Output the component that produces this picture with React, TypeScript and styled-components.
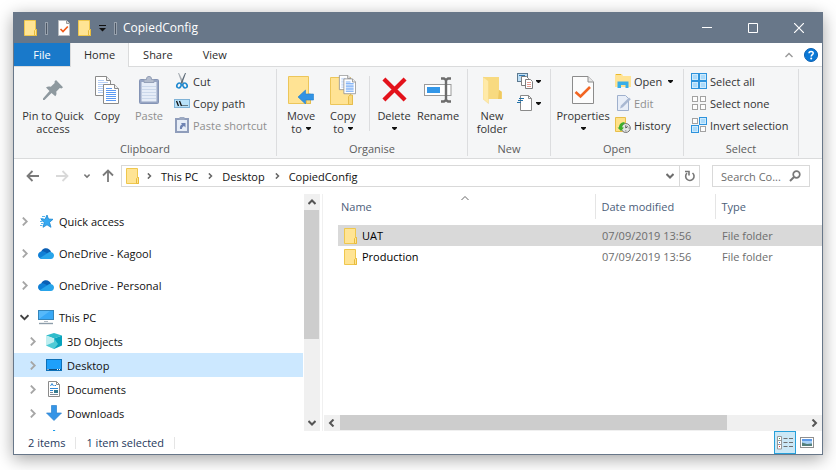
import React from "react";
import styled, { createGlobalStyle, css } from "styled-components";

const GlobalStyle = createGlobalStyle`
  *, *::before, *::after { box-sizing: border-box; }
  body { margin: 0; background: #fff; }
  body, button, input, table {
    font-family: "Open Sans", "Noto Sans", sans-serif;
    font-size: 11px;
    line-height: 13px;
  }
  button { border: 0; padding: 0; margin: 0; background: none; color: inherit; cursor: default; }
  svg { display: block; flex: none; }
`;

/* ---------- window frame ---------- */

const Page = styled.div`
  display: flex;
  height: 100vh;
  min-height: 360px;
  padding: 12px 13px 15px;
  overflow: hidden;
`;

const Window = styled.div`
  flex: 1;
  min-width: 0;
  display: flex;
  flex-direction: column;
  background: #fff;
  border: 1px solid #687789;
  box-shadow: 0 4px 16px rgba(0, 0, 0, 0.36);
`;

const TitleBar = styled.header`
  display: flex;
  align-items: center;
  height: 30px;
  flex: none;
  padding-left: 10px;
  background: #687789;
  color: #fff;
`;

const QuickTools = styled.div<{ $lead?: number }>`
  display: flex;
  align-items: center;
  gap: 8px;
  margin-left: ${(p) => p.$lead ?? 0}px;
`;

const IconButton = styled.button`
  display: flex;
  align-items: center;
  justify-content: center;
`;

const TitleDivider = styled.span`
  width: 3px;
  height: 13px;
  border: 1px solid #96a0ac;
  background: #4d5866;
`;

const Title = styled.h1`
  flex: 1;
  margin: 0 0 0 6px;
  font-size: 12px;
  line-height: 16px;
  font-weight: 400;
`;

const CaptionButton = styled(IconButton)`
  width: 46px;
  height: 30px;
`;

/* ---------- tabs ---------- */

const TabRow = styled.nav`
  display: flex;
  flex: none;
  height: 24px;
  border-bottom: 1px solid #dadbdc;
  color: #2b2b2b;
`;

const Tab = styled.button<{ $kind?: "file" | "active" }>`
  min-width: 56px;
  padding: 0 13px;
  border: solid transparent;
  border-width: 0 1px;
  height: 23px;
  ${(p) => p.$kind === "file" && css`background: #1979ca; border-color: #1979ca; color: #fff;`}
  ${(p) =>
    p.$kind === "active" &&
    css`
      height: 24px;
      padding-bottom: 1px;
      min-width: 58px;
      background: #f5f6f7;
      border-color: #dadbdc;
    `}
`;

const TabTools = styled.div`
  display: flex;
  align-items: center;
  gap: 11px;
  margin-left: auto;
  padding-right: 4px;
`;

/* ---------- ribbon ---------- */

const Ribbon = styled.div`
  display: flex;
  flex: none;
  height: 92px;
  padding-top: 2px;
  background: #f5f6f7;
  border-bottom: 1px solid #dadbdc;
  color: #333;
`;

const Group = styled.section<{ $width: number }>`
  width: ${(p) => p.$width}px;
  flex: none;
  display: flex;
  flex-direction: column;
  height: 87px;
  border-right: 1px solid #dcdddf;
`;

const GroupBody = styled.div<{ $pad?: number }>`
  display: flex;
  flex: 1;
  align-items: flex-start;
  padding: 1px 0 0 ${(p) => p.$pad ?? 4}px;
`;

const GroupLabel = styled.h2`
  margin: 0;
  padding-bottom: 1px;
  font-size: 11px;
  line-height: 13px;
  font-weight: 400;
  text-align: center;
  color: #5c5c5c;
`;

const BigButton = styled.button<{ $width: number; $off?: boolean }>`
  display: flex;
  flex-direction: column;
  align-items: center;
  width: ${(p) => p.$width}px;
  color: ${(p) => (p.$off ? "#8f8f8f" : "inherit")};
  white-space: nowrap;
`;

const BigIcon = styled.span`
  display: flex;
  align-items: center;
  height: 39px;
`;

const Line = styled.span`
  display: flex;
  align-items: center;
  gap: 4px;
  min-height: 13px;
`;

const SmallStack = styled.div<{ $gap?: number }>`
  display: flex;
  flex-direction: column;
  margin-left: ${(p) => p.$gap ?? 0}px;
`;

const SmallButton = styled.button<{ $off?: boolean }>`
  display: flex;
  align-items: center;
  gap: 3px;
  height: 22px;
  white-space: nowrap;
  color: ${(p) => (p.$off ? "#8f8f8f" : "inherit")};
`;

const MenuGap = styled.span<{ $wide?: boolean }>`
  margin-left: ${(p) => (p.$wide ? 3 : 0)}px;
`;

const InnerDivider = styled.span`
  width: 1px;
  height: 55px;
  margin: 6px 4px 0;
  background: #dcdddf;
`;

/* ---------- address bar ---------- */

const AddressRow = styled.div`
  display: flex;
  align-items: center;
  flex: none;
  height: 35px;
  padding: 0 12px 1px;
`;

const NavButtons = styled.div`
  display: flex;
  align-items: center;
  gap: 15px;
  margin-right: 6px;
`;

const NavPair = styled.div`
  display: flex;
  align-items: center;
  gap: 11px;
`;

const AddressBox = styled.div`
  display: flex;
  align-items: center;
  flex: 1;
  min-width: 0;
  height: 22px;
  padding-left: 4px;
  border: 1px solid #d9d9d9;
  color: #111;
`;

const Crumbs = styled.div`
  display: flex;
  align-items: center;
  flex: 1;
  gap: 9px;
  margin-left: 7px;
`;

const Crumb = styled.button`
  color: #111;
  white-space: nowrap;
`;

const BoxButton = styled(IconButton)<{ $line?: boolean }>`
  width: 20px;
  height: 20px;
  border-left: 1px solid ${(p) => (p.$line ? "#d9d9d9" : "transparent")};
`;

const SearchBox = styled.label`
  display: flex;
  align-items: center;
  width: 98px;
  height: 22px;
  margin-left: 12px;
  padding: 0 8px;
  border: 1px solid #d9d9d9;
`;

const SearchInput = styled.input`
  flex: 1;
  min-width: 0;
  border: 0;
  padding: 0;
  outline: 0;
  background: none;
  &::placeholder { color: #6d6d6d; opacity: 1; }
`;

/* ---------- body ---------- */

const Body = styled.div`
  display: flex;
  flex: 1;
  min-height: 0;
`;

const SidePane = styled.aside`
  display: flex;
  flex: none;
  width: 309px;
  padding-right: 2px;
  border-right: 1px solid #f0f0f0;
`;

const Tree = styled.ul`
  flex: 1;
  min-width: 0;
  margin: 0;
  padding: 15px 1px 0 0;
  list-style: none;
  overflow: hidden;
`;

const TreeItem = styled.li<{ $gap?: boolean }>`
  margin-bottom: ${(p) => (p.$gap ? 8 : 0)}px;
`;

const TreeButton = styled.button<{ $depth: number; $on?: boolean }>`
  display: flex;
  align-items: center;
  width: 100%;
  height: 24px;
  gap: 5px;
  padding-left: ${(p) => 5 + p.$depth * 8}px;
  background: ${(p) => (p.$on ? "#cce8ff" : "transparent")};
  color: #111;
  white-space: nowrap;
`;

const Twisty = styled.span`
  display: flex;
  justify-content: center;
  width: 10px;
  margin-right: 4px;
`;

const IconSlot = styled.span`
  display: flex;
  justify-content: center;
  width: 16px;
`;

const ScrollBar = styled.div<{ $side?: boolean }>`
  display: flex;
  flex: none;
  flex-direction: ${(p) => (p.$side ? "row" : "column")};
  ${(p) => (p.$side ? "height: 16px;" : "width: 16px;")}
  background: #f0f0f0;
`;

const ScrollArrow = styled(IconButton)`
  flex: none;
  width: 16px;
  height: 16px;
`;

const Track = styled.div<{ $side?: boolean }>`
  flex: 1;
  ${(p) => (p.$side ? "padding-bottom: 1px;" : "padding-right: 1px;")}
`;

const Thumb = styled.div<{ $side?: boolean }>`
  background: #cdcdcd;
  ${(p) => (p.$side ? "width: 83%; height: 100%;" : "height: 63%; width: 100%;")}
`;

const Files = styled.main`
  display: flex;
  flex-direction: column;
  flex: 1;
  min-width: 0;
  padding-left: 1px;
`;

const ListArea = styled.div`
  flex: 1;
  padding-left: 14px;
  overflow: hidden;
`;

const Table = styled.table`
  width: 100%;
  table-layout: fixed;
  border-collapse: collapse;
`;

const Head = styled.th<{ $width?: number }>`
  width: ${(p) => (p.$width ? `${p.$width}px` : "auto")};
  height: 25px;
  padding: 0 0 0 ${(p) => (p.$width ? 6 : 3)}px;
  border-left: ${(p) => (p.$width ? 1 : 0)}px solid #e5e5e5;
  text-align: left;
  font-weight: 400;
  color: #4c607a;
`;

const HeadInner = styled.div`
  display: grid;
  grid-template-columns: 1fr auto 1fr;
  height: 25px;
  padding-right: 5px;
  align-items: center;
`;

const SortMark = styled.span`
  align-self: start;
`;

const Spacer = styled.tr`
  height: 6px;
`;

const Row = styled.tr<{ $on?: boolean }>`
  height: 21px;
  background: ${(p) => (p.$on ? "#d9d9d9" : "transparent")};
`;

const Cell = styled.td`
  padding: 0 0 0 7px;
  color: #6d6d6d;
  white-space: nowrap;
`;

const NameCell = styled(Cell)`
  padding-left: 6px;
  color: #000;
`;

const FileName = styled.div`
  display: flex;
  align-items: center;
  gap: 5px;
`;

/* ---------- status bar ---------- */

const StatusBar = styled.footer`
  display: flex;
  align-items: center;
  flex: none;
  height: 23px;
  padding: 0 7px 0 14px;
  color: #26395c;
`;

const StatusText = styled.span`
  display: flex;
  align-items: center;
  height: 12px;
  padding-right: 10px;
  margin-right: 10px;
  border-right: 1px solid #e5e5e5;
`;

const Views = styled.div`
  display: flex;
  align-items: center;
  gap: 3px;
  margin-left: auto;
`;

const ViewButton = styled(IconButton)<{ $on?: boolean }>`
  height: 23px;
  width: ${(p) => (p.$on ? 22 : 16)}px;
  border: ${(p) => (p.$on ? 1 : 0)}px solid #26a0da;
  background: ${(p) => (p.$on ? "#cbe8f6" : "transparent")};
`;

/* ---------- icons ---------- */

const Folder = () => (
  <svg width="13" height="16" viewBox="0 0 13 16">
    <path d="M.5.5h11v9h1v6H.5z" fill="#ffe494" stroke="#efc74d" />
    <path d="M10.500 15V10.500l1-1h1v6h-2z" fill="#ffe494" stroke="#e8bb3b" />
  </svg>
);

const Chevron = ({ dir, size = 8, color = "#a0a0a0", w = 2 }: { dir: "r" | "l" | "u" | "d"; size?: number; color?: string; w?: number }) => {
  const d = { r: "M2.500 0.500L6 4L2.500 7.500", l: "M5.500 0.500L2 4L5.500 7.500", u: "M.5 6L4 2.500L7.500 6", d: "M.5 2L4 5.500L7.500 2" }[dir];
  return (
    <svg width={size} height={size} viewBox="0 0 8 8">
      <path d={d} fill="none" stroke={color} strokeWidth={w} />
    </svg>
  );
};

const Caret = () => (
  <svg width="5" height="3" viewBox="0 0 5 3"><path d="M0 0h5v1L3 3H2L0 1z" fill="#111" /></svg>
);

const Arrow = ({ turn = 0, color = "#7a7a7a" }: { turn?: number; color?: string }) => (
  <svg width="14" height="14" viewBox="0 0 14 14">
    <g transform={`rotate(${turn} 7 7)`} fill="none" stroke={color} strokeWidth="1.800">
      <path d="M1.500 7H13M6.500 2L1.500 7l5 5" />
    </g>
  </svg>
);

const CheckPage = () => (
  <svg width="22" height="28" viewBox="0 0 22 28">
    <path d="M.5.5h15.500l5.500 5.500v21.500H.5z" fill="#fcfcfc" stroke="#8c8c8c" />
    <path d="M16 .5V6h5.500" fill="#e6e6e6" stroke="#8c8c8c" />
    <path d="M3.500 16l5 4.500L18 11" fill="none" stroke="#f26522" strokeWidth="2.600" />
  </svg>
);

const MiniCheckPage = () => (
  <svg width="12" height="16" viewBox="0 0 12 16">
    <path d="M.5.500h8l3 3v12H.5z" fill="#fff" stroke="#b9bcc0" />
    <path d="M8.500.5v3h3" fill="#ddd" stroke="#9b9b9b" />
    <path d="M2.500 9l2.500 2.500L9.800 6.500" fill="none" stroke="#f05a1a" strokeWidth="1.700" />
  </svg>
);

const Pin = () => (
  <svg width="20" height="20" viewBox="0 0 20 20">
    <path d="M13 0l7 7.200-1.500 1.200-1.700-.3-3.600 3.600c.6 1.800.3 3.300-.9 4.600L8.500 13 1.500 20H0v-1.500L6.500 11 3 7.500c1.500-1.200 3-1.400 4.800-.7l3.900-3.700-.2-1.700z" fill="#8e999f" />
  </svg>
);

const SheetLines = ({ x, y, faint }: { x: number; y: number; faint?: boolean }) => (
  <g transform={`translate(${x} ${y})`}>
    <path d="M.5.500h11l4 4v15H.5z" fill="#fff" stroke="#8a8a8a" />
    <path d="M11.500.500v4h4" fill="#eee" stroke="#8a8a8a" />
    <path d="M3 4.500h6M3 6.500h10M3 8.500h10M3 10.500h10M3 12.500h10M3 14.500h10M3 16.500h10" stroke={faint ? "#b5cff7" : "#5c9af3"} />
  </g>
);

const CopyBig = () => (
  <svg width="24" height="28" viewBox="0 0 24 28">
    <SheetLines x={0} y={0} faint />
    <SheetLines x={8} y={8} />
  </svg>
);

const PasteBig = () => (
  <svg width="20" height="28" viewBox="0 0 20 28">
    <rect x=".5" y="3.500" width="19" height="24" rx="1" fill="#97a5c3" stroke="#8494b5" />
    <rect x="2.500" y="6" width="15" height="19.500" fill="#e6edf8" />
    <path d="M3 10.500h14M3 13.500h14M3 16.500h14M3 19.500h14M3 22.500h14" stroke="#cbd8eb" />
    <path d="M5 6.500V3.500h2.500C7.500 1 8.500.500 10 .500s2.500.500 2.500 3H15V6.500z" fill="#b3bccd" stroke="#95a1b8" />
  </svg>
);

const Scissors = () => (
  <svg width="16" height="16" viewBox="0 0 16 16">
    <path d="M4 0l1 0 5 10-2 1z" fill="#a7adb3" />
    <path d="M12 0l-1 0-4.500 10 1.500 1z" fill="#5d6b78" />
    <ellipse cx="5" cy="12.500" rx="2" ry="2.500" transform="rotate(30 5 12.500)" fill="none" stroke="#1e88cf" strokeWidth="1.600" />
    <ellipse cx="11" cy="12.500" rx="2" ry="2.500" transform="rotate(-30 11 12.500)" fill="none" stroke="#1e88cf" strokeWidth="1.600" />
  </svg>
);

const PathIcon = () => (
  <svg width="16" height="16" viewBox="0 0 16 16">
    <rect x=".5" y="4.500" width="15" height="8" fill="#b8e2fa" stroke="#7fb2d6" />
    <path d="M2.500 6l2 5M5.500 6l2 5" stroke="#111" strokeWidth="1.300" />
    <path d="M8.500 10.500h1M10.500 10.500h1M12.500 10.500h1" stroke="#111" />
  </svg>
);

const PasteShortcut = () => (
  <svg width="16" height="16" viewBox="0 0 16 16">
    <rect x="2" y="2" width="12" height="13" fill="#e6edf7" stroke="#8f9dbb" strokeWidth="2" />
    <path d="M5.500 0h5v3h-5z" fill="#9daac2" />
    <path d="M6 12c-.5-2.500.5-4 2-4.500L7 6h4.500v4.500L10 9c-1.500.5-2 1.500-2 3z" fill="#6f84b3" />
  </svg>
);

const BigFolderBack = () => (
  <>
    <path d="M.5.500h20v18h2v9H.5z" fill="#ffe394" stroke="#ecc65a" />
    <path d="M18.500 27.500v-8l1.500-1.500h2.500v9.500z" fill="#f9d97e" stroke="#e6bd4d" />
  </>
);

const MoveTo = () => (
  <svg width="26" height="28" viewBox="0 0 26 28">
    <BigFolderBack />
    <path d="M10 21l7.500-7V18h8v6h-8v4z" fill="#3193e4" stroke="#1f7fd0" strokeWidth=".6" />
  </svg>
);

const CopyTo = () => (
  <svg width="26" height="30" viewBox="0 0 26 30">
    <g transform="translate(0 2)"><BigFolderBack /></g>
    <g transform="translate(9 0) scale(.75)"><SheetLines x={0} y={0} faint /></g>
    <g transform="translate(13.500 3.500) scale(.78)"><SheetLines x={0} y={0} /></g>
  </svg>
);

const DeleteX = () => (
  <svg width="25" height="25" viewBox="0 0 26 26">
    <path d="M2 2l22 22M24 2L2 24" stroke="#e3121b" strokeWidth="4.400" />
  </svg>
);

const RenameIcon = () => (
  <svg width="28" height="28" viewBox="0 0 28 28">
    <rect x=".5" y="8.500" width="26.500" height="11" fill="#fff" stroke="#9a9a9a" />
    <rect x="3" y="11" width="13" height="6" fill="#3397e8" />
    <path d="M17 2.500h3l2 1.500 2-1.500h3M17 25.500h3l2-1.500 2 1.500h3M22 3v22" fill="none" stroke="#6c6c6c" strokeWidth="2.400" />
  </svg>
);

const NewFolder = () => (
  <svg width="19" height="28" viewBox="0 0 19 28">
    <path d="M0 1h16v13l3 2v7H0z" fill="#f8da80" />
    <path d="M16 14l2.500 1.500V23H15z" fill="#eec861" />
    <path d="M0 1l5.500 4v22.500L0 23z" fill="#ffeaa8" stroke="#f3d685" strokeWidth=".5" />
  </svg>
);

const NewItem = () => (
  <svg width="16" height="16" viewBox="0 0 16 16">
    <rect x=".5" y=".5" width="10" height="8" fill="#bfe0f7" stroke="#5d7a90" />
    <path d="M2 2.500h6" stroke="#2f78b0" />
    <path d="M4.500 3.500h5l2 2v7h-7z" fill="#fff" stroke="#7d7d7d" />
    <path d="M8.500 6.500h5l2 2v7h-7z" fill="#fff" stroke="#7d7d7d" />
    <path d="M10 9.500h4M10 11.500h4M10 13.500h4" stroke="#e49a90" />
  </svg>
);

const EasyAccess = () => (
  <svg width="16" height="16" viewBox="0 0 16 16">
    <path d="M3.500.500h8l3 3v12h-11z" fill="#fff" stroke="#8a8a8a" />
    <path d="M11.500.500v3h3" fill="none" stroke="#8a8a8a" />
    <path d="M2 3.500h5M1 5.500h5M0 7.500h4" stroke="#2371a8" strokeWidth="1.200" />
  </svg>
);

const OpenIcon = () => (
  <svg width="16" height="16" viewBox="0 0 16 16">
    <path d="M0 1h7l1 2h8v11H0z" fill="#ffe394" />
    <path d="M1 1.500h5" stroke="#e9b92d" />
    <path d="M2.500 15V8.500h11V15h-3v-3h-4.500v3z" fill="#38aee8" />
  </svg>
);

const EditIcon = () => (
  <svg width="16" height="16" viewBox="0 0 16 16">
    <path d="M2.500.500h8l3 3v12h-11z" fill="#e8eef8" stroke="#9fb0cd" />
    <path d="M5 13.500l1-3L14 2.500l1.800 1.800-8 8z" fill="#a9b8d2" />
  </svg>
);

const HistoryIcon = () => (
  <svg width="16" height="16" viewBox="0 0 16 16">
    <path d="M.5.500h10v14H.5z" fill="#ffe189" stroke="#e8bf4b" />
    <circle cx="10.800" cy="11" r="4.500" fill="#e2e4e4" stroke="#777" />
    <path d="M10.800 8.300V11l2-1.500M10.800 13.500v.8M13.600 11h.8" fill="none" stroke="#555" />
    <path d="M9.500 5v2C7.500 7.500 7 9 7.500 10.500H9L6 14l-3.500-3.500H4C4 7.500 6 5.200 9.500 5z" fill="#3dae2b" />
  </svg>
);

const Tiles = ({ on }: { on: boolean[] }) => (
  <svg width="16" height="16" viewBox="0 0 16 16">
    {on.map((v, i) => {
      const x = (i % 2) * 8;
      const y = i > 1 ? 8 : 0;
      return v ? (
        <g key={i}>
          <rect x={x + 0.5} y={y + 0.5} width="7" height="7" fill="#cdeafd" stroke="#2d93dd" />
          <rect x={x + 2} y={y + 2} width="4" height="4" fill="#a9dafb" />
        </g>
      ) : (
        <rect key={i} x={x + 1.5} y={y + 1.5} width="5" height="5" fill="#fdfdfd" stroke="#a2a2a2" />
      );
    })}
  </svg>
);

const Star = () => (
  <svg width="16" height="16" viewBox="0 0 16 16">
    <path d="M9 2l1.500 4 4.500.300-3.500 3 1.500 5-4-2.500-4 2.500 1.300-4.800L3 6.500l4.200-.3z" fill="#35a9f2" stroke="#1b86d0" strokeWidth=".8" />
    <path d="M4 3.500h3M2.500 5.500h3M2 8.500h2.500M3 10.500h2.500M2 12.500h2.500" stroke="#57b5ef" />
  </svg>
);

const Cloud = () => (
  <svg width="16" height="11" viewBox="0 0 16 11">
    <path d="M3 5C3 2 5.500.200 8 .200S12.500 2 13 4L9 7z" fill="#0a5fb4" />
    <path d="M3.500 3.500c2-.5 3 .3 8 3.500l-7 4C2 11 0 9.500 0 7.300S1.500 3.700 3.500 3.500z" fill="#0f7fd6" />
    <path d="M2 10l7-4.500c1-1 2.300-1.700 3.800-1.500C14.800 4.300 16 5.800 16 7.500S14.800 11 12.800 11H4.500C3.500 11 2.600 10.700 2 10z" fill="#28a4ea" />
  </svg>
);

const Monitor = () => (
  <svg width="16" height="16" viewBox="0 0 16 16">
    <rect x=".5" y="1.500" width="15" height="9" fill="#56b9fa" stroke="#3485ba" />
    <path d="M1 10L12 2h3v8z" fill="#38a8f6" />
    <path d="M6 12.500h4" stroke="#b3bcc4" />
    <path d="M1 14.500h14" stroke="#8d9daa" strokeWidth="1.400" />
  </svg>
);

const Cube = () => (
  <svg width="16" height="16" viewBox="0 0 16 16">
    <path d="M8 0l8 2.500L8 5.500 0 2.500z" fill="#2fbccb" />
    <path d="M0 2.500L8 5.500V16L0 12.500z" fill="#bfeef0" />
    <path d="M8 5.500l8-3v10L8 16z" fill="#08a3bd" />
    <path d="M0 12.500L8 9v7zM8 5.500l4 5.500-4 5z" fill="#4fcbd6" />
  </svg>
);

const DesktopIcon = () => (
  <svg width="16" height="12" viewBox="0 0 16 12">
    <rect x=".5" y=".5" width="15" height="11" fill="#1ea0fb" stroke="#0d70b8" />
    <path d="M1 10.500h14" stroke="#0b4f86" />
    <path d="M1.500 10.500h1M11 10.500h1M13 10.500h1" stroke="#fff" />
  </svg>
);

const DocIcon = () => (
  <svg width="12" height="16" viewBox="0 0 12 16">
    <path d="M.5.500h8l3 3v12H.5z" fill="#fff" stroke="#8b8b8b" />
    <path d="M8.500.500v3h3" fill="none" stroke="#8b8b8b" />
    <path d="M2.500 5l1.500-2.500L5.500 5M6.500 4.500h1.500M2 7.500h8M2 9.500h3" fill="none" stroke="#2d88d8" />
    <path d="M6 9h4v3H6z" fill="#357b90" />
    <path d="M2 11.500h3M2 13.500h8" stroke="#7e8c99" />
  </svg>
);

const DownIcon = () => (
  <svg width="16" height="16" viewBox="0 0 16 16">
    <path d="M5.500.500h5V8h5L8 15.500.5 8h5z" fill="#3594e6" stroke="#2b82cf" strokeWidth=".7" />
  </svg>
);

const MusicIcon = () => (
  <svg width="16" height="16" viewBox="0 0 16 16">
    <path d="M7 1h2c0 2 4 3 4 6l-1 2c0-3-2-3.500-3-4v8a3 2.500 0 1 1-2-2z" fill="#1b9bea" />
  </svg>
);

const HelpIcon = () => (
  <svg width="14" height="14" viewBox="0 0 14 14">
    <circle cx="7" cy="7" r="6.500" fill="#0a78d6" stroke="#0a5fb0" />
    <path d="M5 5.300C5 3 9.200 3 9.200 5.200 9.200 6.700 7.200 6.700 7.200 8.500" fill="none" stroke="#fff" strokeWidth="1.500" />
    <circle cx="7.200" cy="10.500" r="1" fill="#fff" />
  </svg>
);

const DetailsIcon = () => (
  <svg width="16" height="14" viewBox="0 0 16 14">
    <path d="M.5.500h4v12.500h-4zM.5 4.500h4M.5 8.500h4" fill="#fff" stroke="#999" />
    <path d="M2 2.500h1" stroke="#3a9a5a" />
    <path d="M2 6.500h1" stroke="#2b84d8" />
    <path d="M2 10.500h1" stroke="#d33" />
    <path d="M6.500 2.500h4M12 2.500h4M6.500 6.500h4M12 6.500h4M6.500 10.500h4M12 10.500h4" stroke="#707070" />
  </svg>
);

const ThumbIcon = () => (
  <svg width="14" height="11" viewBox="0 0 14 11">
    <rect x=".5" y=".5" width="13" height="10" fill="#fff" stroke="#8f8f8f" />
    <rect x="2" y="2" width="10" height="7" fill="#a9d2f8" />
    <path d="M2 2h10v2H2z" fill="#5d9ae8" />
    <path d="M2 5.500l5 1.500 5-.5V9H2z" fill="#54807c" />
  </svg>
);

/* ---------- data ---------- */

type Node = { name: string; icon: React.ReactNode; depth: number; open?: boolean; on?: boolean; gap?: boolean };

const nodes: Node[] = [
  { name: "Quick access", icon: <Star />, depth: 0, gap: true },
  { name: "OneDrive - Kagool", icon: <Cloud />, depth: 0, gap: true },
  { name: "OneDrive - Personal", icon: <Cloud />, depth: 0, gap: true },
  { name: "This PC", icon: <Monitor />, depth: 0, open: true },
  { name: "3D Objects", icon: <Cube />, depth: 1 },
  { name: "Desktop", icon: <DesktopIcon />, depth: 1, on: true },
  { name: "Documents", icon: <DocIcon />, depth: 1 },
  { name: "Downloads", icon: <DownIcon />, depth: 1 },
  { name: "", icon: <MusicIcon />, depth: 1 },
];

const files = [
  { name: "UAT", date: "07/09/2019 13:56", type: "File folder", on: true },
  { name: "Production", date: "07/09/2019 13:56", type: "File folder", on: false },
];

const crumbs = ["This PC", "Desktop", "CopiedConfig"];

/* ---------- parts ---------- */

type BigProps = { icon: React.ReactNode; lines: string[]; width: number; menu?: boolean; off?: boolean };

const Big = ({ icon, lines, width, menu, off }: BigProps) => {
  const rows = menu && lines.length === 1 ? [...lines, ""] : lines;
  return (
    <BigButton $width={width} $off={off} disabled={off}>
      <BigIcon>{icon}</BigIcon>
      {rows.map((t, i) => (
        <Line key={i}>
          {t}
          {menu && i === rows.length - 1 && <Caret />}
        </Line>
      ))}
    </BigButton>
  );
};

type SmallProps = { icon: React.ReactNode; text?: string; menu?: boolean; off?: boolean; label?: string };

const Small = ({ icon, text, menu, off, label }: SmallProps) => (
  <SmallButton $off={off} disabled={off} aria-label={label}>
    {icon}
    {text}
    {menu && <MenuGap $wide={!!text}><Caret /></MenuGap>}
  </SmallButton>
);

export default function App() {
  return (
    <>
      <GlobalStyle />
      <Page>
        <Window>
          <TitleBar>
            <QuickTools>
              <Folder />
              <TitleDivider />
            </QuickTools>
            <QuickTools $lead={10}>
              <IconButton aria-label="Properties"><MiniCheckPage /></IconButton>
              <IconButton aria-label="New folder"><Folder /></IconButton>
              <IconButton aria-label="Customise toolbar">
                <svg width="7" height="7" viewBox="0 0 7 7">
                  <path d="M0 .500h7" stroke="#111" />
                  <path d="M0 3h7L3.500 6.500z" fill="#111" />
                </svg>
              </IconButton>
              <TitleDivider />
            </QuickTools>
            <Title>CopiedConfig</Title>
            <CaptionButton aria-label="Minimise">
              <svg width="10" height="10" viewBox="0 0 10 10"><path d="M0 4.500h10" stroke="#fff" /></svg>
            </CaptionButton>
            <CaptionButton aria-label="Maximise">
              <svg width="10" height="10" viewBox="0 0 10 10"><path d="M.5.500h9v9h-9z" fill="none" stroke="#fff" /></svg>
            </CaptionButton>
            <CaptionButton aria-label="Close">
              <svg width="10" height="10" viewBox="0 0 10 10"><path d="M0 0l10 10M10 0L0 10" stroke="#fff" strokeWidth="1.200" /></svg>
            </CaptionButton>
          </TitleBar>

          <TabRow>
            <Tab $kind="file">File</Tab>
            <Tab $kind="active">Home</Tab>
            <Tab>Share</Tab>
            <Tab>View</Tab>
            <TabTools>
              <IconButton aria-label="Collapse ribbon"><Chevron dir="u" color="#999" w={1.4} /></IconButton>
              <IconButton aria-label="Help"><HelpIcon /></IconButton>
            </TabTools>
          </TabRow>

          <Ribbon>
            <Group $width={263}>
              <GroupBody>
                <Big icon={<Pin />} lines={["Pin to Quick", "access"]} width={70} />
                <Big icon={<CopyBig />} lines={["Copy"]} width={38} />
                <Big icon={<PasteBig />} lines={["Paste"]} width={46} off />
                <SmallStack $gap={2}>
                  <Small icon={<Scissors />} text="Cut" />
                  <Small icon={<PathIcon />} text="Copy path" />
                  <Small icon={<PasteShortcut />} text="Paste shortcut" off />
                </SmallStack>
              </GroupBody>
              <GroupLabel>Clipboard</GroupLabel>
            </Group>
            <Group $width={191}>
              <GroupBody>
                <Big icon={<MoveTo />} lines={["Move", "to"]} width={40} menu />
                <Big icon={<CopyTo />} lines={["Copy", "to"]} width={44} menu />
                <InnerDivider />
                <Big icon={<DeleteX />} lines={["Delete"]} width={40} menu />
                <Big icon={<RenameIcon />} lines={["Rename"]} width={48} />
              </GroupBody>
              <GroupLabel>Organise</GroupLabel>
            </Group>
            <Group $width={83}>
              <GroupBody>
                <Big icon={<NewFolder />} lines={["New", "folder"]} width={40} />
                <SmallStack $gap={5}>
                  <Small icon={<NewItem />} label="New item" menu />
                  <Small icon={<EasyAccess />} label="Easy access" menu />
                </SmallStack>
              </GroupBody>
              <GroupLabel>New</GroupLabel>
            </Group>
            <Group $width={133}>
              <GroupBody>
                <Big icon={<CheckPage />} lines={["Properties"]} width={56} menu />
                <SmallStack $gap={4}>
                  <Small icon={<OpenIcon />} text="Open" menu />
                  <Small icon={<EditIcon />} text="Edit" off />
                  <Small icon={<HistoryIcon />} text="History" />
                </SmallStack>
              </GroupBody>
              <GroupLabel>Open</GroupLabel>
            </Group>
            <Group $width={115}>
              <GroupBody $pad={7}>
                <SmallStack>
                  <Small icon={<Tiles on={[true, true, true, true]} />} text="Select all" />
                  <Small icon={<Tiles on={[false, false, false, false]} />} text="Select none" />
                  <Small icon={<Tiles on={[false, true, true, false]} />} text="Invert selection" />
                </SmallStack>
              </GroupBody>
              <GroupLabel>Select</GroupLabel>
            </Group>
          </Ribbon>

          <AddressRow>
            <NavButtons>
              <IconButton aria-label="Back"><Arrow /></IconButton>
              <IconButton aria-label="Forward"><Arrow turn={180} color="#d9d9d9" /></IconButton>
              <NavPair>
                <IconButton aria-label="Recent locations"><Chevron dir="d" size={6} color="#777" /></IconButton>
                <IconButton aria-label="Up"><Arrow turn={90} /></IconButton>
              </NavPair>
            </NavButtons>
            <AddressBox>
              <Folder />
              <Crumbs>
                {crumbs.map((c) => (
                  <React.Fragment key={c}>
                    <Chevron dir="r" size={6} color="#666" />
                    <Crumb>{c}</Crumb>
                  </React.Fragment>
                ))}
              </Crumbs>
              <BoxButton aria-label="Previous locations"><Chevron dir="d" color="#6d6d6d" /></BoxButton>
              <BoxButton $line aria-label="Refresh">
                <svg width="12" height="12" viewBox="0 0 12 12">
                  <path d="M3 3.200A4.200 4.200 0 1 0 8.500 3" fill="none" stroke="#777" strokeWidth="1.600" />
                  <path d="M1 1.500h4v4" fill="none" stroke="#777" strokeWidth="1.600" />
                </svg>
              </BoxButton>
            </AddressBox>
            <SearchBox>
              <SearchInput aria-label="Search CopiedConfig" placeholder="Search Co..." />
              <svg width="12" height="12" viewBox="0 0 12 12">
                <circle cx="7.500" cy="4.500" r="3.300" fill="none" stroke="#777" strokeWidth="1.700" />
                <path d="M5 7L1 11" stroke="#777" strokeWidth="2" />
              </svg>
            </SearchBox>
          </AddressRow>

          <Body>
            <SidePane>
              <Tree>
                {nodes.map((n, i) => (
                  <TreeItem key={i} $gap={n.gap}>
                    <TreeButton $depth={n.depth} $on={n.on} aria-label={n.name || "Music"}>
                      <Twisty><Chevron dir={n.open ? "d" : "r"} size={9} color={n.open ? "#404040" : "#a6a6a6"} w={1.6} /></Twisty>
                      <IconSlot>{n.icon}</IconSlot>
                      {n.name}
                    </TreeButton>
                  </TreeItem>
                ))}
              </Tree>
              <ScrollBar>
                <ScrollArrow aria-label="Scroll up"><Chevron dir="u" color="#555" /></ScrollArrow>
                <Track><Thumb /></Track>
                <ScrollArrow aria-label="Scroll down"><Chevron dir="d" color="#555" /></ScrollArrow>
              </ScrollBar>
            </SidePane>

            <Files>
              <ListArea>
                <Table>
                  <thead>
                    <tr>
                      <Head>
                        <HeadInner>
                          Name
                          <SortMark><Chevron dir="u" color="#666" w={1} /></SortMark>
                        </HeadInner>
                      </Head>
                      <Head $width={120}>Date modified</Head>
                      <Head $width={107}>Type</Head>
                    </tr>
                  </thead>
                  <tbody>
                    <Spacer aria-hidden="true" />
                    {files.map((f) => (
                      <Row key={f.name} $on={f.on}>
                        <NameCell><FileName><Folder />{f.name}</FileName></NameCell>
                        <Cell>{f.date}</Cell>
                        <Cell>{f.type}</Cell>
                      </Row>
                    ))}
                  </tbody>
                </Table>
              </ListArea>
              <ScrollBar $side>
                <ScrollArrow aria-label="Scroll left"><Chevron dir="l" color="#555" /></ScrollArrow>
                <Track $side><Thumb $side /></Track>
                <ScrollArrow aria-label="Scroll right"><Chevron dir="r" color="#555" /></ScrollArrow>
              </ScrollBar>
            </Files>
          </Body>

          <StatusBar>
            <StatusText>2 items</StatusText>
            <StatusText>1 item selected</StatusText>
            <Views>
              <ViewButton $on aria-label="Details view"><DetailsIcon /></ViewButton>
              <ViewButton aria-label="Large icons view"><ThumbIcon /></ViewButton>
            </Views>
          </StatusBar>
        </Window>
      </Page>
    </>
  );
}
